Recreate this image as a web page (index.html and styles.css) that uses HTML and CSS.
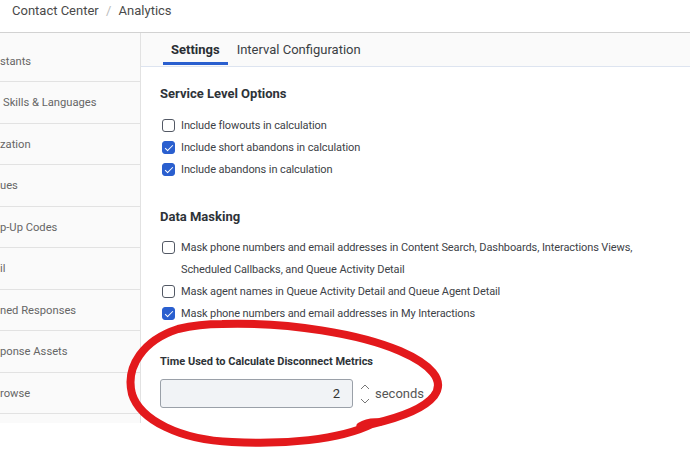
FILE: index.html
```html
<!DOCTYPE html>
<html lang="en">
<head>
    <meta charset="UTF-8">
    <meta name="viewport" content="width=device-width, initial-scale=1.0">
    <title>Analytics</title>
    <link rel="stylesheet" href="styles.css">
</head>
<body>
    <div class="crumbs">
        <span>Contact Center</span>
        <span class="sep">/</span>
        <span>Analytics</span>
    </div>

    <div class="main">
        <!-- menu lateral, rolado para a direita -->
        <ul class="sidebar">
            <li class="first">stants</li>
            <li class="indent">Skills &amp; Languages</li>
            <li>zation</li>
            <li>ues</li>
            <li>p-Up Codes</li>
            <li>il</li>
            <li>ned Responses</li>
            <li>ponse Assets</li>
            <li>rowse</li>
            <li class="last"></li>
        </ul>

        <div class="panel">
            <div class="tabs">
                <span class="tab active">Settings</span>
                <span class="tab">Interval Configuration</span>
            </div>

            <div class="content">
                <h2 class="section-title">Service Level Options</h2>
                <div class="option"><span class="box"></span><span>Include flowouts in calculation</span></div>
                <div class="option"><span class="box checked"></span><span>Include short abandons in calculation</span></div>
                <div class="option"><span class="box checked"></span><span>Include abandons in calculation</span></div>

                <h2 class="section-title masking">Data Masking</h2>
                <div class="option"><span class="box"></span><span>Mask phone numbers and email addresses in Content Search, Dashboards, Interactions Views, Scheduled Callbacks, and Queue Activity Detail</span></div>
                <div class="option"><span class="box"></span><span>Mask agent names in Queue Activity Detail and Queue Agent Detail</span></div>
                <div class="option"><span class="box checked"></span><span>Mask phone numbers and email addresses in My Interactions</span></div>

                <label class="field-label">Time Used to Calculate Disconnect Metrics</label>
                <div class="field-row">
                    <div class="number">2</div>
                    <div class="spin">
                        <svg width="10" height="22" viewBox="0 0 10 22">
                            <path d="M1 6 L5 2 L9 6" fill="none" stroke="#777" stroke-width="1"/>
                            <path d="M1 16 L5 20 L9 16" fill="none" stroke="#777" stroke-width="1"/>
                        </svg>
                    </div>
                    <span class="unit">seconds</span>
                </div>
            </div>
        </div>
    </div>

    <!-- marcação feita à mão por cima da captura -->
    <svg class="scribble" width="690" height="451" viewBox="0 0 690 451">
        <path d="M222 324 C290 322 360 334 400 351 C430 364 446 380 434 396 C423 410 398 418 372 424 C340 440 282 445 232 442 C180 440 140 420 132 394 C125 366 144 340 178 329 C195 325 210 324 222 324 Z"
              fill="none" stroke="#e3191c" stroke-width="8" stroke-linecap="round"/>
        <path d="M360 426 C366 422 372 421 380 422" fill="none" stroke="#e3191c" stroke-width="7" stroke-linecap="round"/>
    </svg>
</body>
</html>
```

FILE: styles.css
```css
body {
    margin: 0;
    width: 690px;
    height: 451px;
    overflow: hidden;
    position: relative;
    background-color: #fff;
    font-family: Roboto, "Liberation Sans", sans-serif;
    color: #33383d;
}

.crumbs {
    height: 32px;
    padding-left: 12px;
    line-height: 22px;
    font-size: 13px;
    color: #4a4a4a;
    border-bottom: 1px solid #d2d2d2;
}

.crumbs .sep {
    color: #bbb;
    margin: 0 4px;
}

.main {
    display: flex;
    align-items: flex-start;
}

.sidebar {
    list-style: none;
    margin: 0;
    padding: 0;
    width: 140px;
    height: 390px;
    overflow: hidden;
    background-color: #fafafa;
    border-right: 1px solid #e2e2e2;
    font-size: 11.2px;
    color: #666;
}

.sidebar li {
    height: 40.5px;
    line-height: 42px;
    border-bottom: 1px solid #e2e2e2;
    white-space: nowrap;
}

.sidebar li.first {
    height: 48px;
    line-height: 57px;
}

.sidebar li.indent {
    padding-left: 3px;
}

.sidebar li.last {
    border-bottom: none;
}

.panel {
    flex: 1;
}

.tabs {
    height: 33px;
    background-color: #fafafa;
    border-bottom: 1px solid #dde4f0;
    display: flex;
    gap: 1px;
    padding-left: 22px;
    font-size: 13px;
}

.tab {
    padding: 0 8px;
    line-height: 34px;
    color: #3a3f44;
}

.tab.active {
    font-weight: bold;
    color: #2a2e33;
    border-bottom: 3px solid #2a5fcf;
    height: 29px;
    line-height: 34px;
}

.content {
    padding: 17px 0 0 19px;
}

.section-title {
    margin: 0 0 11px 0;
    font-size: 13px;
    line-height: 20px;
    font-weight: bold;
    color: #2e3338;
}

.section-title.masking {
    margin-top: 26px;
    margin-bottom: 10px;
}

.option {
    display: flex;
    align-items: flex-start;
    gap: 6px;
    font-size: 11px;
    letter-spacing: -0.1px;
    line-height: 22px;
    color: #3d4247;
    padding-right: 30px;
}

.box {
    flex: none;
    width: 11px;
    height: 11px;
    margin: 4px 0 0 2px;
    border: 1.5px solid #535965;
    border-radius: 3px;
    background-color: #fff;
    position: relative;
}

.box.checked {
    background-color: #2a5fcf;
    border-color: #2a5fcf;
}

.box.checked::after {
    content: "";
    position: absolute;
    left: 3.5px;
    top: 0.5px;
    width: 3px;
    height: 7px;
    border: solid #fff;
    border-width: 0 1.8px 1.8px 0;
    transform: rotate(45deg);
}

.field-label {
    display: block;
    margin-top: 29px;
    font-size: 11px;
    line-height: 16px;
    font-weight: bold;
    color: #2e3338;
}

.field-row {
    display: flex;
    align-items: center;
    margin-top: 9px;
}

.number {
    width: 179px;
    height: 27px;
    line-height: 27px;
    padding-right: 12px;
    text-align: right;
    font-size: 13px;
    color: #333;
    background-color: #f1f3f6;
    border: 1px solid #9aa0a8;
    border-radius: 3px;
}

.spin {
    margin-left: 7px;
    display: flex;
}

.unit {
    margin-left: 5px;
    font-size: 13px;
    color: #555;
}

.scribble {
    position: absolute;
    left: 0;
    top: 0;
    pointer-events: none;
}
```
